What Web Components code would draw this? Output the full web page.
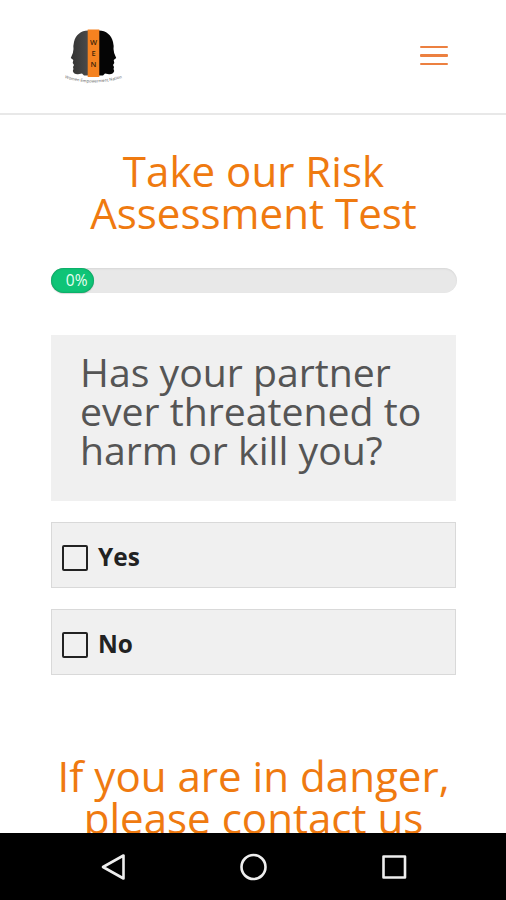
<!DOCTYPE html>
<html lang="en">
<head>
<meta charset="UTF-8">
<meta name="viewport" content="width=device-width, initial-scale=1.0">
<title>Risk Assessment Test</title>
<style>
    body {
        margin: 0;
        background: #fff;
        font-family: "Open Sans", sans-serif;
    }
</style>
</head>
<body>
<risk-app>
    <site-header slot="header"></site-header>
    <page-heading>Take our Risk<br>Assessment Test</page-heading>
    <progress-meter value="0"></progress-meter>
    <question-card>Has your partner<br>ever threatened to<br>harm or kill you?</question-card>
    <answer-option>Yes</answer-option>
    <answer-option>No</answer-option>
    <page-heading class="contact">If you are in danger,<br>please contact us</page-heading>
    <android-nav slot="nav"></android-nav>
</risk-app>

<script>
class RiskApp extends HTMLElement {
    constructor() {
        super();
        this.attachShadow({ mode: 'open' });
    }

    connectedCallback() {
        this.shadowRoot.innerHTML = `
            <style>
                :host {
                    display: flex;
                    flex-direction: column;
                    height: 900px;
                    overflow: hidden;
                }
                main {
                    flex: 1;
                    min-height: 0;
                    overflow: hidden;
                    padding: 35px 50px 0 51px;
                }
                ::slotted(.contact) {
                    margin: 80px -20px 0;
                }
            </style>
            <slot name="header"></slot>
            <main><slot></slot></main>
            <slot name="nav"></slot>
        `;
    }
}

class SiteHeader extends HTMLElement {
    constructor() {
        super();
        this.attachShadow({ mode: 'open' });
    }

    connectedCallback() {
        this.shadowRoot.innerHTML = `
            <style>
                :host {
                    display: flex;
                    flex: none;
                    box-sizing: border-box;
                    height: 115px;
                    padding: 0 58px 2px 64px;
                    justify-content: space-between;
                    align-items: center;
                    border-bottom: 2px solid #e8e8e8;
                }
                svg {
                    display: block;
                    overflow: visible;
                }
                .menu {
                    display: grid;
                    gap: 6px;
                    width: 28px;
                }
                .menu span {
                    height: 2.3px;
                    border-radius: 1px;
                    background: #ec8040;
                }
                text {
                    font-family: "Open Sans", sans-serif;
                    text-anchor: middle;
                }
                .initial {
                    font-size: 7.5px;
                    font-weight: 600;
                    fill: #3d2408;
                }
                .name {
                    font-size: 4.1px;
                    fill: #555;
                }
            </style>
            <svg width="60" height="60" viewBox="0 0 60 60">
                <defs>
                    <linearGradient id="face">
                        <stop offset="0" stop-color="#333"/>
                        <stop offset="1" stop-color="#4a4a4a"/>
                    </linearGradient>
                    <path id="arc" d="M1 52Q29 61 58 52"/>
                </defs>
                <path fill="url(#face)" d="M24 4.500C17 4.500 11.500 9 10 16Q9 20 9.500 23Q9.500 27 6.800 32L9.300 34L8.700 37L10 39L9 41Q10 43 8.800 45Q10 48.500 14 48.200L18 47.500L20 49.500H24Z"/>
                <path fill="#050505" d="M35 4.500C42 4.500 47.500 9 49 16Q50 20 49.500 23Q49.500 27 52.200 32L49.700 34L50.300 37L49 39L50 41Q49 43 50.200 45Q49 48.500 45 48.200L41 47.500L39 49.500H35Z"/>
                <rect x="23.700" y="3.500" width="11.600" height="47.500" fill="#f58220"/>
                <text class="initial" x="29.500" y="18.500">W</text>
                <text class="initial" x="29.500" y="29.500">E</text>
                <text class="initial" x="29.500" y="41">N</text>
                <text class="name"><textPath href="#arc" startOffset="50%">Women Empowerment Nation</textPath></text>
            </svg>
            <div class="menu"><span></span><span></span><span></span></div>
        `;
    }
}

class PageHeading extends HTMLElement {
    constructor() {
        super();
        this.attachShadow({ mode: 'open' });
    }

    connectedCallback() {
        this.shadowRoot.innerHTML = `
            <style>
                :host {
                    display: block;
                    color: #ef7a10;
                    font-size: 42.1px;
                    line-height: 42.4px;
                    text-align: center;
                    white-space: nowrap;
                }
            </style>
            <slot></slot>
        `;
    }
}

class ProgressMeter extends HTMLElement {
    constructor() {
        super();
        this.attachShadow({ mode: 'open' });
    }

    connectedCallback() {
        const value = Number(this.getAttribute('value'));

        this.shadowRoot.innerHTML = `
            <style>
                :host {
                    display: block;
                    height: 25px;
                    margin: 33.2px -1px 42px 0;
                    border-radius: 13px;
                    background: #e8e8e8;
                    box-shadow: inset 0 1px 2px rgba(0, 0, 0, 0.08);
                }
                .fill {
                    box-sizing: border-box;
                    width: max(42.5px, ${value}%);
                    height: 25px;
                    padding-right: 6px;
                    border-radius: 13px;
                    background: #0fc477;
                    box-shadow: inset 0 0 2px rgba(0, 80, 40, 0.6), 0 1px 1px rgba(0, 0, 0, 0.15);
                    color: #e6fff2;
                    font-size: 15.5px;
                    line-height: 25px;
                    text-align: right;
                }
            </style>
            <div class="fill">${value}%</div>
        `;
    }
}

class QuestionCard extends HTMLElement {
    constructor() {
        super();
        this.attachShadow({ mode: 'open' });
    }

    connectedCallback() {
        this.shadowRoot.innerHTML = `
            <style>
                :host {
                    display: block;
                    box-sizing: border-box;
                    height: 166px;
                    margin-bottom: 21px;
                    padding: 17px 0 0 29px;
                    background: #f0f0f0;
                    color: #555;
                    font-size: 39.2px;
                    line-height: 39.2px;
                    white-space: nowrap;
                }
            </style>
            <slot></slot>
        `;
    }
}

class AnswerOption extends HTMLElement {
    constructor() {
        super();
        this.attachShadow({ mode: 'open' });
    }

    connectedCallback() {
        this.shadowRoot.innerHTML = `
            <style>
                :host {
                    display: flex;
                    box-sizing: border-box;
                    height: 66px;
                    margin-bottom: 21px;
                    padding: 2px 0 0 10px;
                    align-items: center;
                    gap: 10px;
                    border: 1px solid #d9d9d9;
                    background: #f0f0f0;
                    color: #222;
                    font-size: 24.4px;
                    font-weight: 700;
                }
                .box {
                    box-sizing: border-box;
                    width: 26px;
                    height: 26px;
                    margin-top: 3px;
                    border: 2px solid #222;
                    border-radius: 2px;
                }
            </style>
            <span class="box"></span>
            <slot></slot>
        `;
    }
}

class AndroidNav extends HTMLElement {
    constructor() {
        super();
        this.attachShadow({ mode: 'open' });
    }

    connectedCallback() {
        this.shadowRoot.innerHTML = `
            <style>
                :host {
                    display: flex;
                    flex: none;
                    height: 67px;
                    padding: 0 98px;
                    justify-content: space-between;
                    align-items: center;
                    background: #000;
                }
                svg {
                    fill: none;
                    stroke: #eee;
                    stroke-width: 2.6;
                    stroke-linejoin: round;
                }
            </style>
            <svg width="30" height="30"><path d="M25.500 3.500V26.500L5 15Z"/></svg>
            <svg width="30" height="30"><circle cx="15.500" cy="15" r="12"/></svg>
            <svg width="30" height="30"><rect x="5.500" y="4.500" width="21.500" height="21"/></svg>
        `;
    }
}

customElements.define('risk-app', RiskApp);
customElements.define('site-header', SiteHeader);
customElements.define('page-heading', PageHeading);
customElements.define('progress-meter', ProgressMeter);
customElements.define('question-card', QuestionCard);
customElements.define('answer-option', AnswerOption);
customElements.define('android-nav', AndroidNav);
</script>
</body>
</html>
